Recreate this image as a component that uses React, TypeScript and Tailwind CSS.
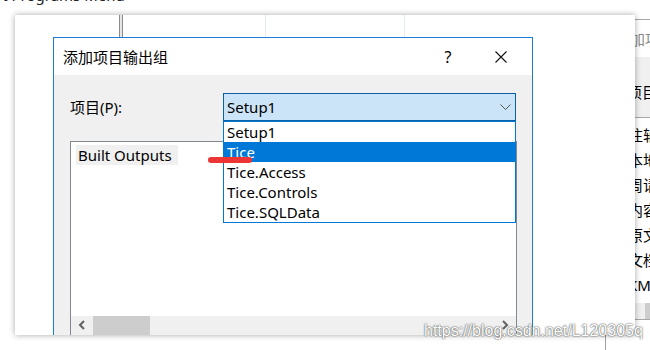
import React from "react";

const font = "font-['Noto_Sans','Noto_Sans_CJK_SC',sans-serif]";

function ChevronLeft() {
  return (
    <svg width="8" height="10" viewBox="0 0 8 10">
      <polyline points="6,1 2,5 6,9" fill="none" stroke="#606060" strokeWidth="2" />
    </svg>
  );
}
function ChevronRight() {
  return (
    <svg width="8" height="10" viewBox="0 0 8 10">
      <polyline points="2,1 6,5 2,9" fill="none" stroke="#606060" strokeWidth="2" />
    </svg>
  );
}

export default function App() {
  const items = ["Setup1", "Tice", "Tice.Access", "Tice.Controls", "Tice.SQLData"];
  const sideItems = ["注轴", "本地", "周请", "内容", "原文", "文档", "KM"];
  return (
    <div className={`relative w-[650px] h-[350px] overflow-hidden bg-white text-black ${font}`}>
      {/* clipped text at the top */}
      <div className="absolute left-[-4px] top-[-14px] text-[15px] leading-[18px] text-[#222] whitespace-nowrap">
        rt Programs Menu
      </div>

      {/* right background panel */}
      <div className="absolute left-[600px] top-0 w-[50px] h-[350px] bg-white flex flex-col text-[15px]">
        <div className="h-[20px] border-b border-[#a8a8a8]" />
        <div className="h-[37px] flex items-center pl-[15px] text-[#8a8a8a] leading-[18px] whitespace-nowrap">添加项目</div>
        <div className="h-[61px] bg-[#f0f0f0] border-b border-[#a8a8a8] flex items-end pb-[16px] pl-[27px] leading-[18px] whitespace-nowrap">
          项目(P)
        </div>
        <div className="flex flex-col pt-[4px]">
          {sideItems.map((s) => (
            <div key={s} className="h-[25px] flex items-center pl-[28px] leading-[18px] whitespace-nowrap">
              {s}
            </div>
          ))}
        </div>
        <div className="mt-[6px] h-[16px] bg-[#f0f0f0] flex pl-[38px]">
          <div className="ml-[7px] w-[10px] bg-[#cdcdcd]" />
        </div>
        <div className="h-[1px] bg-[#a8a8a8]" />
        <div className="flex-1 ml-[5px] border-l border-[#a0a0a0]" />
      </div>

      {/* outer window */}
      <div className="absolute left-[15px] top-[15px] w-[620px] h-[320px] bg-white overflow-hidden shadow-[0_0_6px_rgba(0,0,0,0.35)]">
        <div className="absolute left-[104px] top-0 w-[4px] h-[22px] border-x border-[#8c8c8c] bg-[#e6e6e6]" />
        <div className="absolute left-[250px] top-0 w-[1px] h-[22px] bg-[#e4ebf3]" />
        <div className="absolute left-[389px] top-0 w-[1px] h-[22px] bg-[#e4ebf3]" />

        {/* dialog */}
        <div className="absolute left-[38px] top-[22px] w-[480px] h-[330px] border border-[#1a7fd4] bg-[#f0f0f0] flex flex-col">
          <div className="h-[37px] bg-white flex items-center pl-[9px] text-[15px] leading-[20px]">
            <span>添加项目输出组</span>
            <span className="ml-auto w-[20px] text-center text-[16px]">?</span>
            <span className="ml-[37px] mr-[25px] flex items-center">
              <svg width="12" height="12" viewBox="0 0 12 12">
                <path d="M0.5 0.5 L11.5 11.5 M11.5 0.5 L0.5 11.5" stroke="#111" strokeWidth="1.1" />
              </svg>
            </span>
          </div>
          <div className="flex flex-col pl-[16px] pt-[18px]">
            <div className="flex items-center">
              <div className="w-[153px] text-[15px] leading-[20px]">项目(P):</div>
              <div className="w-[293px] h-[28px] border border-[#0b5fa5] bg-[#cce4f7] flex items-center justify-between pl-[3px] pr-[4px] text-[15px] leading-[20px]">
                <span>Setup1</span>
                <svg width="11" height="6" viewBox="0 0 11 6">
                  <polyline points="0.5,0.5 5.5,5.5 10.5,0.5" fill="none" stroke="#555" strokeWidth="1" />
                </svg>
              </div>
            </div>
            <div className="mt-[20px] w-[447px] h-[196px] border border-[#828790] bg-white flex flex-col">
              <div className="pl-[5px] pt-[1px]">
                <div className="inline-block h-[20px] bg-[#f0f0f0] pl-[2px] pr-[6px] text-[15px] leading-[20px]">Built Outputs</div>
              </div>
              <div className="flex-1" />
              <div className="h-[20px] bg-[#f0f0f0] flex">
                <div className="w-[22px] flex items-center justify-center pb-[2px]"><ChevronLeft /></div>
                <div className="w-[57px] bg-[#cdcdcd]" />
                <div className="flex-1" />
                <div className="w-[22px] flex items-center justify-center pb-[2px]"><ChevronRight /></div>
              </div>
            </div>
          </div>
        </div>
      </div>

      {/* dropdown list */}
      <div className="absolute left-[223px] top-[121px] w-[293px] h-[102px] border border-[#0078d7] bg-white flex flex-col text-[15px]">
        {items.map((it, i) => (
          <div
            key={it}
            className={`h-[20px] leading-[20px] pl-[3px] ${i === 1 ? "bg-[#0078d7] text-white" : ""}`}
          >
            {it}
          </div>
        ))}
      </div>

      {/* red mark */}
      <div className="absolute left-[208px] top-[157px] w-[44px] h-[6px] rounded-full bg-[#ee3535]" />

      {/* watermark */}
      <div className="absolute left-[424px] top-[322px] text-[16px] leading-[18px] text-white font-['Liberation_Sans',sans-serif] whitespace-nowrap [text-shadow:0_0_2px_rgba(0,0,0,0.7),0_0_1px_rgba(0,0,0,0.5)]">
        https://blog.csdn.net/L120305q
      </div>
    </div>
  );
}
